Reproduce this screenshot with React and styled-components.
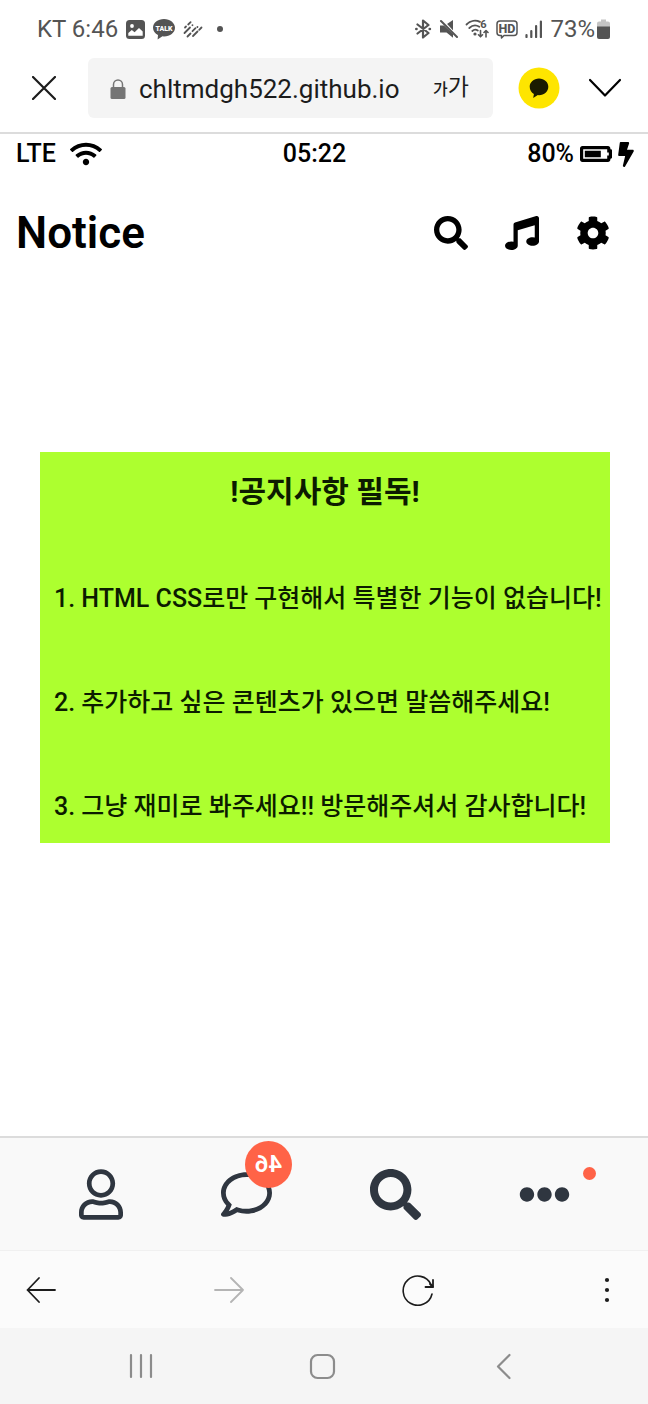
import React from "react";
import styled, { createGlobalStyle, css } from "styled-components";
import {
  FaWifi,
  FaBatteryThreeQuarters,
  FaBolt,
  FaSearch,
  FaMusic,
  FaCog,
  FaRegUser,
  FaRegComment,
  FaEllipsisH,
} from "react-icons/fa";

const GlobalStyle = createGlobalStyle`
  * { box-sizing: border-box; }
  body {
    margin: 0;
    background: #ffffff;
    color: #000000;
    font-family: Roboto, "Noto Sans CJK KR", sans-serif;
  }
  svg { display: block; flex: none; }
`;

const Page = styled.div`
  min-height: 100vh;
  display: flex;
  flex-direction: column;
`;

const Row = css`
  display: flex;
  align-items: center;
`;

const DeviceStatus = styled.div`
  ${Row}
  justify-content: space-between;
  height: 58px;
  padding: 0 38px 0 37px;
  color: #545454;
  font-size: 24px;
  line-height: 28px;
`;

const StatusGroup = styled.div`
  ${Row}
  gap: ${(p) => p.$gap}px;
`;

const BatteryLevel = styled.div`
  ${Row}
  gap: 2px;
`;

const IconButton = styled.button`
  ${Row}
  justify-content: center;
  flex: none;
  width: ${(p) => (p.$width ? `${p.$width}px` : "auto")};
  margin: 0;
  padding: 0;
  border: 0;
  background: none;
  color: inherit;
  font: inherit;
  cursor: pointer;
`;

const BrowserBar = styled.header`
  ${Row}
  padding: 0 26px 14px 0;
  border-bottom: 2px solid #dcdcdc;
`;

const AddressBox = styled.div`
  ${Row}
  flex: 1;
  min-width: 0;
  height: 60px;
  padding: 2px 24px 0 22px;
  border-radius: 6px;
  background: #f4f4f4;
`;

const AddressInput = styled.input`
  flex: 1;
  min-width: 0;
  margin: 0 0 0 13px;
  padding: 0;
  border: 0;
  outline: 0;
  background: transparent;
  color: #1c1c1c;
  font: 400 26px/32px Roboto, sans-serif;
`;

const TextSizeButton = styled(IconButton)`
  align-items: baseline;
  color: #1c1c1c;
  font-size: 23px;
  line-height: 32px;
`;

const SmallGlyph = styled.span`
  font-size: 16px;
  font-weight: 500;
`;

const BrowserActions = styled.div`
  ${Row}
  gap: 28px;
  padding-left: 25px;
`;

const AppStatus = styled.div`
  ${Row}
  justify-content: space-between;
  height: 40px;
  padding: 0 14px 0 16px;
  font-size: 25px;
  font-weight: 500;
  line-height: 30px;
`;

const BoltIcon = styled(FaBolt)`
  width: 16px;
  height: 25px;
`;

const AppHeader = styled.header`
  ${Row}
  justify-content: space-between;
  height: 118px;
  padding: 0 38px 0 16px;
`;

const AppTitle = styled.h1`
  margin: 0;
  font-size: 44px;
  font-weight: 600;
  line-height: 52px;
`;

const HeaderActions = styled.div`
  ${Row}
  gap: 37px;
`;

const Main = styled.main`
  flex: 1;
  padding: 160px 38px 40px 40px;
`;

const NoticeCard = styled.section`
  padding: 24px 14px 20px;
  background: #adff2f;
  color: #0c1c00;
`;

const NoticeTitle = styled.h2`
  margin: 0 0 75px;
  font-size: 30px;
  font-weight: 700;
  line-height: 32px;
  text-align: center;
`;

const NoticeList = styled.div`
  display: flex;
  flex-direction: column;
  gap: 72px;
`;

const NoticeItem = styled.p`
  margin: 0;
  font-size: 25px;
  font-weight: 500;
  line-height: 32px;
  white-space: nowrap;
`;

const TabBar = styled.nav`
  ${Row}
  justify-content: space-between;
  height: 114px;
  padding: 0 78px 0 79px;
  border-top: 2px solid #dcdcdc;
  background: #f9f9f9;
`;

const TabLink = styled.a`
  position: relative;
  display: block;
  color: #2f3640;
`;

const UserIcon = styled(FaRegUser)`
  width: 44px;
  height: 51px;
`;

const Badge = styled.span`
  position: absolute;
  left: 24px;
  top: -28px;
  width: 47px;
  height: 47px;
  border-radius: 50%;
  background: #ff6347;
  color: #ffffff;
  font-size: 24px;
  font-weight: 600;
  line-height: 47px;
  text-align: center;
  transform: scaleX(-1);
`;

const Dot = styled.span`
  position: absolute;
  left: 64px;
  top: -2px;
  width: 13px;
  height: 13px;
  border-radius: 50%;
  background: #ff6347;
`;

const BrowserNav = styled.nav`
  ${Row}
  justify-content: space-between;
  height: 78px;
  padding: 0 26px;
  border-top: 1px solid #f0f0f0;
  background: #fbfbfb;
  color: #1c1c1c;
`;

const SystemNav = styled.nav`
  ${Row}
  justify-content: space-between;
  height: 76px;
  padding: 0 130px 0 127px;
  background: #f5f5f5;
  color: #8c8c8c;
`;

function Svg({ w, h, children, ...rest }) {
  return (
    <svg width={w} height={h} viewBox={`0 0 ${w} ${h}`} fill="none" aria-hidden="true" {...rest}>
      {children}
    </svg>
  );
}

const stroke = { stroke: "currentColor", strokeLinecap: "round", strokeLinejoin: "round" };

const PictureIcon = () => (
  <Svg w={19} h={19}>
    <rect width="19" height="19" rx="3.5" fill="currentColor" />
    <circle cx="6" cy="6" r="1.9" fill="#fff" />
    <path d="M2.3 15.8V13l3.5-3 2.8 2.3 4.4-4.2 3.7 3.5v4.2z" fill="#fff" />
  </Svg>
);

const TalkIcon = () => (
  <Svg w={22} h={22}>
    <path
      d="M11 1C4.900 1 0 4.900 0 9.800c0 3.200 2 5.800 5 7.300L4.600 21.500l4.800-3.200 1.600.2c6.100 0 11-3.900 11-8.700S17.100 1 11 1z"
      fill="currentColor"
    />
    <text x="11" y="12.500" textAnchor="middle" fontFamily="Roboto, sans-serif" fontSize="7" fontWeight="900" fill="#fff">
      TALK
    </text>
  </Svg>
);

const StripesIcon = () => (
  <Svg w={20} h={18}>
    <g {...stroke} strokeWidth="1.8">
      <path d="M2 7.500l1-1M5.200 4.500L7.600 2.200M1.500 13L7 7.500M9.400 5.200l.1-.1M4.500 16.500l3-3M9.500 11.200l3-3M10 16l4.500-4.500M16.200 9.800l2.300-2.300M14.400 7l.1-.1" />
    </g>
  </Svg>
);

const MoreDot = () => (
  <Svg w={6} h={6}>
    <circle cx="3" cy="3" r="3" fill="currentColor" />
  </Svg>
);

const BluetoothIcon = () => (
  <Svg w={18} h={20}>
    <path {...stroke} strokeWidth="2.200" d="M3.500 5.500l11 8.500-5.500 4.500v-17L14.500 6l-11 8.500" />
    <path {...stroke} strokeWidth="2.600" d="M2.300 10h.2M15.700 10h.2" />
  </Svg>
);

const MuteIcon = () => (
  <Svg w={19} h={20}>
    <path d="M1 6.500h4L14 15v3.800L7.500 13.500H1zM8 5l6-4v10.500z" fill="currentColor" />
    <path d="M3.500 1.500l15 15.700" stroke="#fff" strokeWidth="1.200" />
    <path {...stroke} strokeWidth="2" d="M2 2l16 16" />
  </Svg>
);

const WifiSixIcon = () => (
  <Svg w={24} h={20}>
    <g {...stroke} strokeWidth="1.800">
      <path d="M1.500 5.500C5.500 1.400 11 .9 15 2.900M4.300 9c3-2.900 7-3.200 10-1.300M7.300 12c1.700-1.500 3.800-1.600 5.500-.5" />
      <path d="M15.500 11.500v6M13.500 15.800l2 2 2-2M21 18v-6M19 13.500l2-2 2 2" strokeWidth="1.600" />
    </g>
    <circle cx="10" cy="15" r="1.600" fill="currentColor" />
    <text x="18.500" y="8.500" textAnchor="middle" fontFamily="Roboto, sans-serif" fontSize="11" fontWeight="700" fill="currentColor">
      6
    </text>
  </Svg>
);

const HdIcon = () => (
  <Svg w={22} h={20}>
    <path
      {...stroke}
      strokeWidth="1.500"
      d="M4 2h14a3 3 0 0 1 3 3v8.500a3 3 0 0 1-3 3H8L5.500 19v-2.500H4a3 3 0 0 1-3-3V5a3 3 0 0 1 3-3z"
    />
    <text x="11" y="13.700" textAnchor="middle" fontFamily="Roboto, sans-serif" fontSize="12.500" fontWeight="800" fill="currentColor">
      HD
    </text>
  </Svg>
);

const SignalIcon = () => (
  <Svg w={18} h={18}>
    <path {...stroke} strokeWidth="2.200" d="M1.500 15v2M6.300 11v6M11.100 6v11M15.900 1.500V17" />
  </Svg>
);

const BatteryIcon = () => (
  <Svg w={13} h={20}>
    <path d="M4 2.500V.5h5v2h2a2 2 0 0 1 2 2V8H0V4.500a2 2 0 0 1 2-2z" fill="#c4c4c4" />
    <path d="M0 7.500h13V18a2 2 0 0 1-2 2H2a2 2 0 0 1-2-2z" fill="currentColor" />
  </Svg>
);

const CloseIcon = () => (
  <Svg w={24} h={24}>
    <path d="M1 1l22 22M23 1L1 23" stroke="#1c1c1c" strokeWidth="2.200" strokeLinecap="round" />
  </Svg>
);

const LockIcon = () => (
  <Svg w={16} h={20}>
    <rect x="0.500" y="8" width="15" height="12" rx="1.500" fill="#757575" />
    <path d="M3.500 8.500V5.500a4.500 4.500 0 0 1 9 0v3" stroke="#757575" strokeWidth="1.500" />
  </Svg>
);

const KakaoIcon = () => (
  <Svg w={42} h={42}>
    <circle cx="21" cy="21" r="20.500" fill="#fee500" />
    <path
      d="M21 11.500c-5.300 0-9.300 3.700-9.300 8.300 0 3.200 1.700 5.700 4.200 7.200L15.200 31l4.600-2.900 1.200.1c5.300 0 9.300-3.700 9.300-8.400s-4-8.300-9.300-8.300z"
      fill="#1b1b00"
    />
  </Svg>
);

const ChevronDownIcon = () => (
  <Svg w={34} h={20}>
    <path {...stroke} strokeWidth="2.200" d="M2 2l15 15.500L32 2" />
  </Svg>
);

const BackArrow = () => (
  <Svg w={30} h={30}>
    <path {...stroke} strokeWidth="1.800" d="M29 15H1.500M13 3L1.500 15 13 27" />
  </Svg>
);

const ForwardArrow = () => (
  <Svg w={30} h={30} color="#b4b4b4">
    <path {...stroke} strokeWidth="1.800" d="M1 15h28M17 3l12 12-12 12" />
  </Svg>
);

const RefreshIcon = () => (
  <Svg w={32} h={32}>
    <path {...stroke} strokeWidth="1.600" d="M30 20A14.600 14.600 0 1 1 29 10.500L31 13" />
    <path {...stroke} strokeWidth="1.800" d="M31 6v7h-7.500M28 10l3 3" />
  </Svg>
);

const MenuDots = () => (
  <Svg w={30} h={30}>
    <circle cx="15" cy="5" r="2.100" fill="currentColor" />
    <circle cx="15" cy="15" r="2.100" fill="currentColor" />
    <circle cx="15" cy="25" r="2.100" fill="currentColor" />
  </Svg>
);

const RecentsIcon = () => (
  <Svg w={28} h={28}>
    <path {...stroke} strokeWidth="2.200" d="M4 3v22M14 3v22M24 3v22" />
  </Svg>
);

const HomeIcon = () => (
  <Svg w={28} h={28}>
    <rect x="2" y="3" width="23" height="23" rx="6.500" stroke="currentColor" strokeWidth="2.200" />
  </Svg>
);

const SystemBackIcon = () => (
  <Svg w={28} h={28}>
    <path {...stroke} strokeWidth="2.200" d="M19.500 3L8 14.500 19.500 26" />
  </Svg>
);

const notices = [
  "1. HTML CSS로만 구현해서 특별한 기능이 없습니다!",
  "2. 추가하고 싶은 콘텐츠가 있으면 말씀해주세요!",
  "3. 그냥 재미로 봐주세요!! 방문해주셔서 감사합니다!",
];

export default function App() {
  return (
    <Page>
      <GlobalStyle />
      <DeviceStatus>
        <StatusGroup $gap={8}>
          <span>KT 6:46</span>
          <PictureIcon />
          <TalkIcon />
          <StripesIcon />
          <StatusGroup $gap={0}>
            <Svg w={6} h={6} />
            <MoreDot />
          </StatusGroup>
        </StatusGroup>
        <StatusGroup $gap={7}>
          <BluetoothIcon />
          <MuteIcon />
          <WifiSixIcon />
          <HdIcon />
          <SignalIcon />
          <BatteryLevel>
            <span>73%</span>
            <BatteryIcon />
          </BatteryLevel>
        </StatusGroup>
      </DeviceStatus>

      <BrowserBar>
        <IconButton $width={88} aria-label="닫기">
          <CloseIcon />
        </IconButton>
        <AddressBox>
          <LockIcon />
          <AddressInput aria-label="주소" defaultValue="chltmdgh522.github.io" />
          <TextSizeButton aria-label="글자 크기">
            <SmallGlyph>가</SmallGlyph>
            <span>가</span>
          </TextSizeButton>
        </AddressBox>
        <BrowserActions>
          <IconButton aria-label="카카오톡 공유">
            <KakaoIcon />
          </IconButton>
          <IconButton aria-label="접기">
            <ChevronDownIcon />
          </IconButton>
        </BrowserActions>
      </BrowserBar>

      <AppStatus>
        <StatusGroup $gap={14}>
          <span>LTE</span>
          <FaWifi size={32} />
        </StatusGroup>
        <span>05:22</span>
        <StatusGroup $gap={6}>
          <span>80%</span>
          <FaBatteryThreeQuarters size={32} />
          <BoltIcon />
        </StatusGroup>
      </AppStatus>

      <AppHeader>
        <AppTitle>Notice</AppTitle>
        <HeaderActions>
          <IconButton aria-label="검색">
            <FaSearch size={34} />
          </IconButton>
          <IconButton aria-label="음악">
            <FaMusic size={34} />
          </IconButton>
          <IconButton aria-label="설정">
            <FaCog size={34} />
          </IconButton>
        </HeaderActions>
      </AppHeader>

      <Main>
        <NoticeCard>
          <NoticeTitle>!공지사항 필독!</NoticeTitle>
          <NoticeList>
            {notices.map((text) => (
              <NoticeItem key={text}>{text}</NoticeItem>
            ))}
          </NoticeList>
        </NoticeCard>
      </Main>

      <TabBar>
        <TabLink href="#friends" aria-label="친구">
          <UserIcon />
        </TabLink>
        <TabLink href="#chats" aria-label="채팅">
          <FaRegComment size={51} />
          <Badge>46</Badge>
        </TabLink>
        <TabLink href="#find" aria-label="찾기">
          <FaSearch size={51} />
        </TabLink>
        <TabLink href="#more" aria-label="더보기">
          <FaEllipsisH size={51} />
          <Dot />
        </TabLink>
      </TabBar>

      <BrowserNav>
        <IconButton aria-label="뒤로">
          <BackArrow />
        </IconButton>
        <IconButton aria-label="앞으로">
          <ForwardArrow />
        </IconButton>
        <IconButton aria-label="새로고침">
          <RefreshIcon />
        </IconButton>
        <IconButton aria-label="메뉴">
          <MenuDots />
        </IconButton>
      </BrowserNav>

      <SystemNav>
        <IconButton aria-label="최근 앱">
          <RecentsIcon />
        </IconButton>
        <IconButton aria-label="홈">
          <HomeIcon />
        </IconButton>
        <IconButton aria-label="이전">
          <SystemBackIcon />
        </IconButton>
      </SystemNav>
    </Page>
  );
}
